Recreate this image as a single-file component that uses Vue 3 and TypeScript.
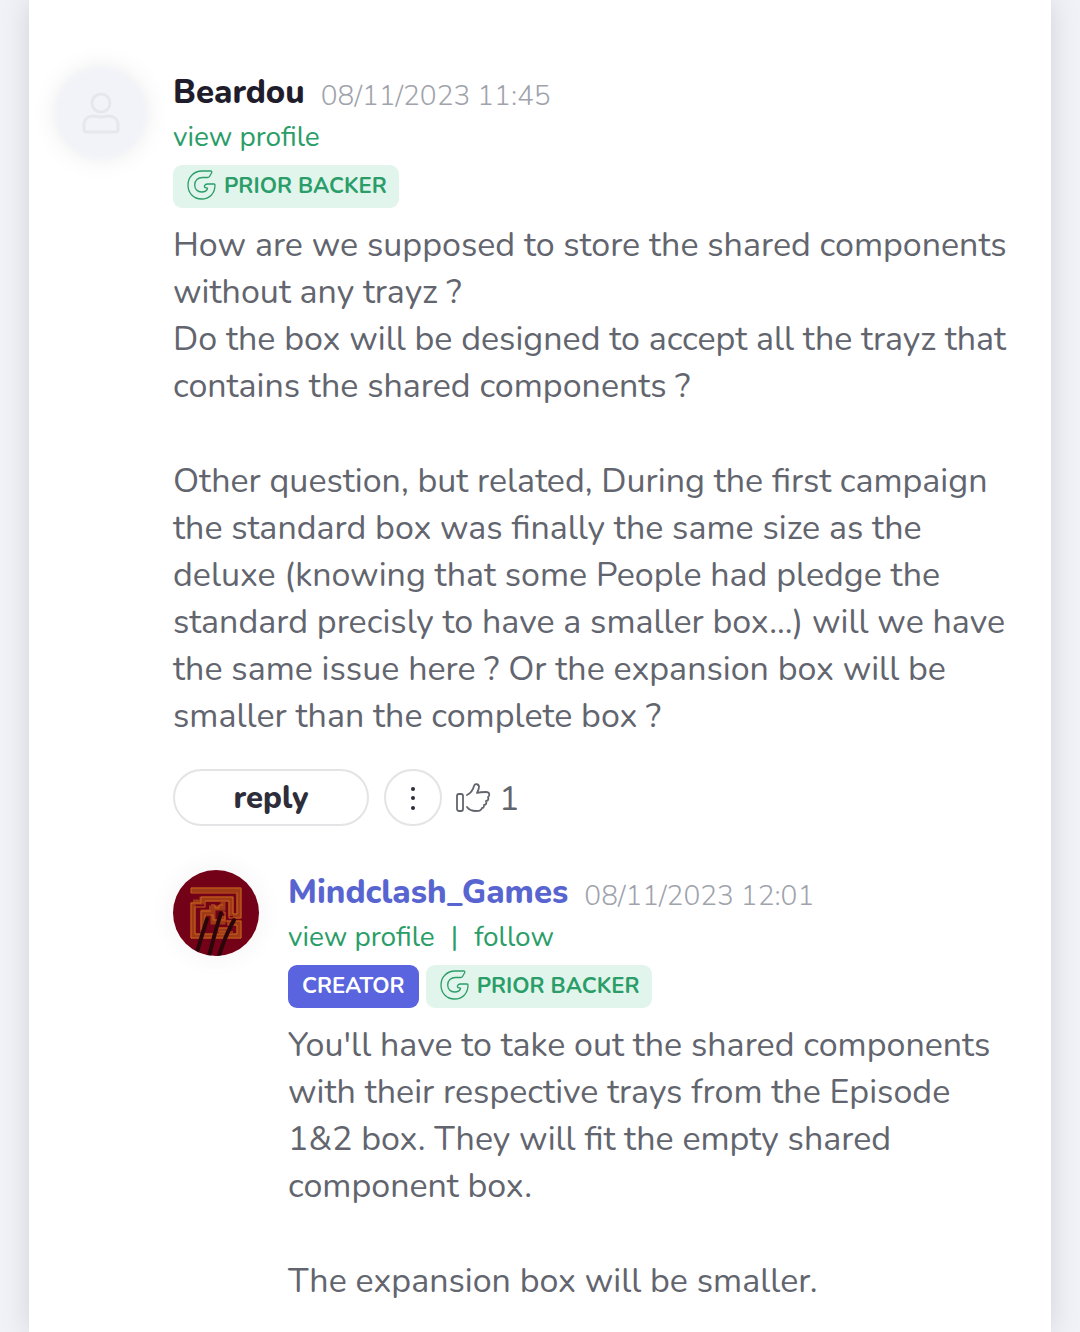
<script setup lang="ts">
interface Comment {
  id: number
  author: string
  date: string
  creator: boolean
  paragraphs: string[][]
}

const question: Comment = {
  id: 1,
  author: 'Beardou',
  date: '08/11/2023 11:45',
  creator: false,
  paragraphs: [
    [
      'How are we supposed to store the shared components',
      'without any trayz ?',
      'Do the box will be designed to accept all the trayz that',
      'contains the shared components ?',
    ],
    [
      'Other question, but related, During the first campaign',
      'the standard box was finally the same size as the',
      'deluxe (knowing that some People had pledge the',
      'standard precisly to have a smaller box...) will we have',
      'the same issue here ? Or the expansion box will be',
      'smaller than the complete box ?',
    ],
  ],
}

const answer: Comment = {
  id: 2,
  author: 'Mindclash_Games',
  date: '08/11/2023 12:01',
  creator: true,
  paragraphs: [
    [
      "You'll have to take out the shared components",
      'with their respective trays from the Episode',
      '1&2 box. They will fit the empty shared',
      'component box.',
    ],
    ['The expansion box will be smaller.'],
  ],
}
</script>

<template>
  <main class="page">
    <section class="card">
      <article class="comment">
        <div class="avatar placeholder">
          <svg width="38" height="42" viewBox="0 0 38 42" fill="none" stroke="#e6e7ec" stroke-width="3" stroke-linejoin="round">
            <circle cx="19" cy="11" r="9" />
            <path d="M2 38v-5c0-6 4-9 9-9 3 0 5 1 8 1s5-1 8-1c5 0 9 3 9 9v5c0 1-1 2-2 2H4c-1 0-2-1-2-2z" />
          </svg>
        </div>
        <div class="content">
          <header class="heading">
            <h2 class="author">{{ question.author }}</h2>
            <time class="date">{{ question.date }}</time>
          </header>
          <nav class="links"><a href="#profile">view profile</a></nav>
          <div class="badges">
            <span class="badge backer">
              <svg class="mark" width="29" height="30" viewBox="0 0 29 30" fill="none" stroke="currentColor" stroke-width="1.3" stroke-linejoin="round">
                <path d="M15 1H23.500Q25.500 1 24.500 3L22.500 6.500Q22 7.500 20.500 7.500H15.500C11 7.500 7.700 10.500 7.700 15C7.700 19 10.500 22 14.500 22C17.500 22 20 20.500 20.500 18.500C20.800 17.500 18 18.500 17.500 17C17 15.500 18.500 14 20.500 14H27Q28 14 28 15C28 23.500 22.500 29 14.500 29C6.500 29 1 23 1 15C1 7 7 1 15 1Z" />
              </svg>
              PRIOR BACKER
            </span>
          </div>
          <div class="text">
            <p v-for="(lines, i) in question.paragraphs" :key="i">
              <template v-for="(line, j) in lines" :key="j">{{ line }}<br></template>
            </p>
          </div>
          <div class="actions">
            <button class="reply" type="button">reply</button>
            <button class="more" type="button" aria-label="More options">
              <svg width="6" height="26" viewBox="0 0 6 26" fill="currentColor">
                <circle cx="3" cy="4" r="2" /><circle cx="3" cy="13" r="2" /><circle cx="3" cy="23" r="2" />
              </svg>
            </button>
            <button class="like" type="button" aria-label="Like, 1 so far">
              <svg width="36" height="32" viewBox="0 0 36 32" fill="none" stroke="currentColor" stroke-width="1.8" stroke-linejoin="round" stroke-linecap="round">
                <rect x="2" y="12" width="6" height="17" rx="2" />
                <path d="M12 13C16 11 18 8 19 4C20 1 24 2 24 5C24 7 23 9 22 11C25 10 28 10 31 10C35 10 35 14 33 15C34 17 33 19 31 19C32 21 31 23 29 23C29 25 29 26 27 26C26 29 24 29 21 29C17 29 14 28 12 25" />
              </svg>
              <span class="count">1</span>
            </button>
          </div>

          <article class="comment nested">
            <div class="avatar">
              <svg width="86" height="86" viewBox="0 0 86 86">
                <rect width="86" height="86" fill="#730218" />
                <g fill="none" stroke="#9f3a16" stroke-width="5">
                  <path d="M18 20H66V46H60M20 32H29V29H58V46M20 32V66H66V53H54" />
                  <path d="M36 38H50V32M30 60V42H40V52H50V46M42 60H56" />
                </g>
                <g fill="none" stroke="#c8611c" stroke-width="1">
                  <path d="M18 18H68V48H56V31H32V37H22V64H64V55H55M18 18V23H64V44H60V27H28V33H18V68H68V51H52" />
                  <path d="M28 62V41H38M32 58V45H40V50H52V42H48M38 35H42V38H46V35H50M42 58H58M46 62H60" />
                </g>
                <g fill="none" stroke="#2a060b" stroke-width="4" stroke-linecap="round">
                  <path d="M34 49Q29 65 24 82M48 43Q42 62 36 86M61 50Q52 66 46 86" />
                </g>
              </svg>
            </div>
            <div class="content">
              <header class="heading">
                <h2 class="author creator-name">{{ answer.author }}</h2>
                <time class="date">{{ answer.date }}</time>
              </header>
              <nav class="links">
                <a href="#creator">view profile</a><span>|</span><a href="#follow">follow</a>
              </nav>
              <div class="badges">
                <span v-if="answer.creator" class="badge creator">CREATOR</span>
                <span class="badge backer">
                  <svg class="mark" width="29" height="30" viewBox="0 0 29 30" fill="none" stroke="currentColor" stroke-width="1.3" stroke-linejoin="round">
                    <path d="M15 1H23.500Q25.500 1 24.500 3L22.500 6.500Q22 7.500 20.500 7.500H15.500C11 7.500 7.700 10.500 7.700 15C7.700 19 10.500 22 14.500 22C17.500 22 20 20.500 20.500 18.500C20.800 17.500 18 18.500 17.500 17C17 15.500 18.500 14 20.500 14H27Q28 14 28 15C28 23.500 22.500 29 14.500 29C6.500 29 1 23 1 15C1 7 7 1 15 1Z" />
                  </svg>
                  PRIOR BACKER
                </span>
              </div>
              <div class="text">
                <p v-for="(lines, i) in answer.paragraphs" :key="i">
                  <template v-for="(line, j) in lines" :key="j">{{ line }}<br></template>
                </p>
              </div>
            </div>
          </article>
        </div>
      </article>
    </section>
  </main>
</template>

<style>
body {
  margin: 0;
  background: #f0f2f8;
}
</style>

<style scoped>
.page {
  padding: 0 29px;
  overflow: hidden;
  font-family: Nunito, "Noto Sans", sans-serif;
  color: #62656e;
}
.card {
  background: #fff;
  box-shadow: 0 0 28px rgba(0, 0, 0, 0.13);
  padding: 70px 0 29px 29px;
}
.comment {
  display: flex;
  align-items: flex-start;
  gap: 29px;
}
.nested {
  margin-top: 44px;
}
.avatar {
  flex: none;
  display: flex;
  align-items: center;
  justify-content: center;
  width: 86px;
  height: 86px;
  border-radius: 50%;
  overflow: hidden;
  box-shadow: 0 0 28px rgba(0, 0, 0, 0.06);
}
.placeholder {
  background: #f2f3f9;
  box-shadow: 0 0 4px 3px #f3f4f9, 0 0 28px rgba(0, 0, 0, 0.1);
}
.content {
  flex: 1;
  min-width: 0;
}
.heading {
  display: flex;
  align-items: flex-start;
  gap: 16px;
  height: 46px;
  line-height: 46px;
}
.author {
  margin: 0;
  font-size: 33px;
  font-weight: 800;
  color: #1f1d2b;
}
.creator-name {
  color: #5865d0;
}
.date {
  font-size: 28px;
  line-height: 52px;
  font-weight: 300;
  color: #9fa3ac;
}
.links {
  display: flex;
  gap: 16px;
  height: 41px;
  line-height: 43px;
  font-size: 28px;
  color: #2a9d68;
}
.links a {
  color: inherit;
  text-decoration: none;
}
.badges {
  display: flex;
  gap: 7px;
  margin: 8px 0 14px;
}
.badge {
  display: flex;
  align-items: center;
  gap: 8px;
  height: 43px;
  padding: 0 14px;
  border-radius: 9px;
  font-size: 22px;
  font-weight: 700;
  line-height: 43px;
}
.mark {
  margin-bottom: 3px;
}
.backer {
  padding-right: 12px;
  background: #e2f5ec;
  color: #2a9d68;
}
.creator {
  background: #5964de;
  color: #fff;
}
.text {
  font-size: 34px;
  line-height: 47px;
  white-space: nowrap;
}
.text p {
  margin: 0;
}
.text p + p {
  margin-top: 48px;
}
.actions {
  display: flex;
  align-items: center;
  gap: 15px;
  margin-top: 29px;
}
button {
  font-family: inherit;
  padding: 0;
  background: #fff;
  color: #2e2d3a;
}
.reply {
  width: 196px;
  height: 57px;
  border: 2px solid #e4e4e6;
  border-radius: 29px;
  font-size: 31px;
  font-weight: 800;
}
.more {
  display: flex;
  align-items: center;
  justify-content: center;
  width: 58px;
  height: 57px;
  border: 2px solid #e4e4e6;
  border-radius: 29px;
}
.like {
  display: flex;
  align-items: center;
  gap: 8px;
  margin-left: -2px;
  border: 0;
  color: #62656e;
  font-size: 34px;
  line-height: 47px;
}
.count {
  padding-top: 3px;
}
</style>
